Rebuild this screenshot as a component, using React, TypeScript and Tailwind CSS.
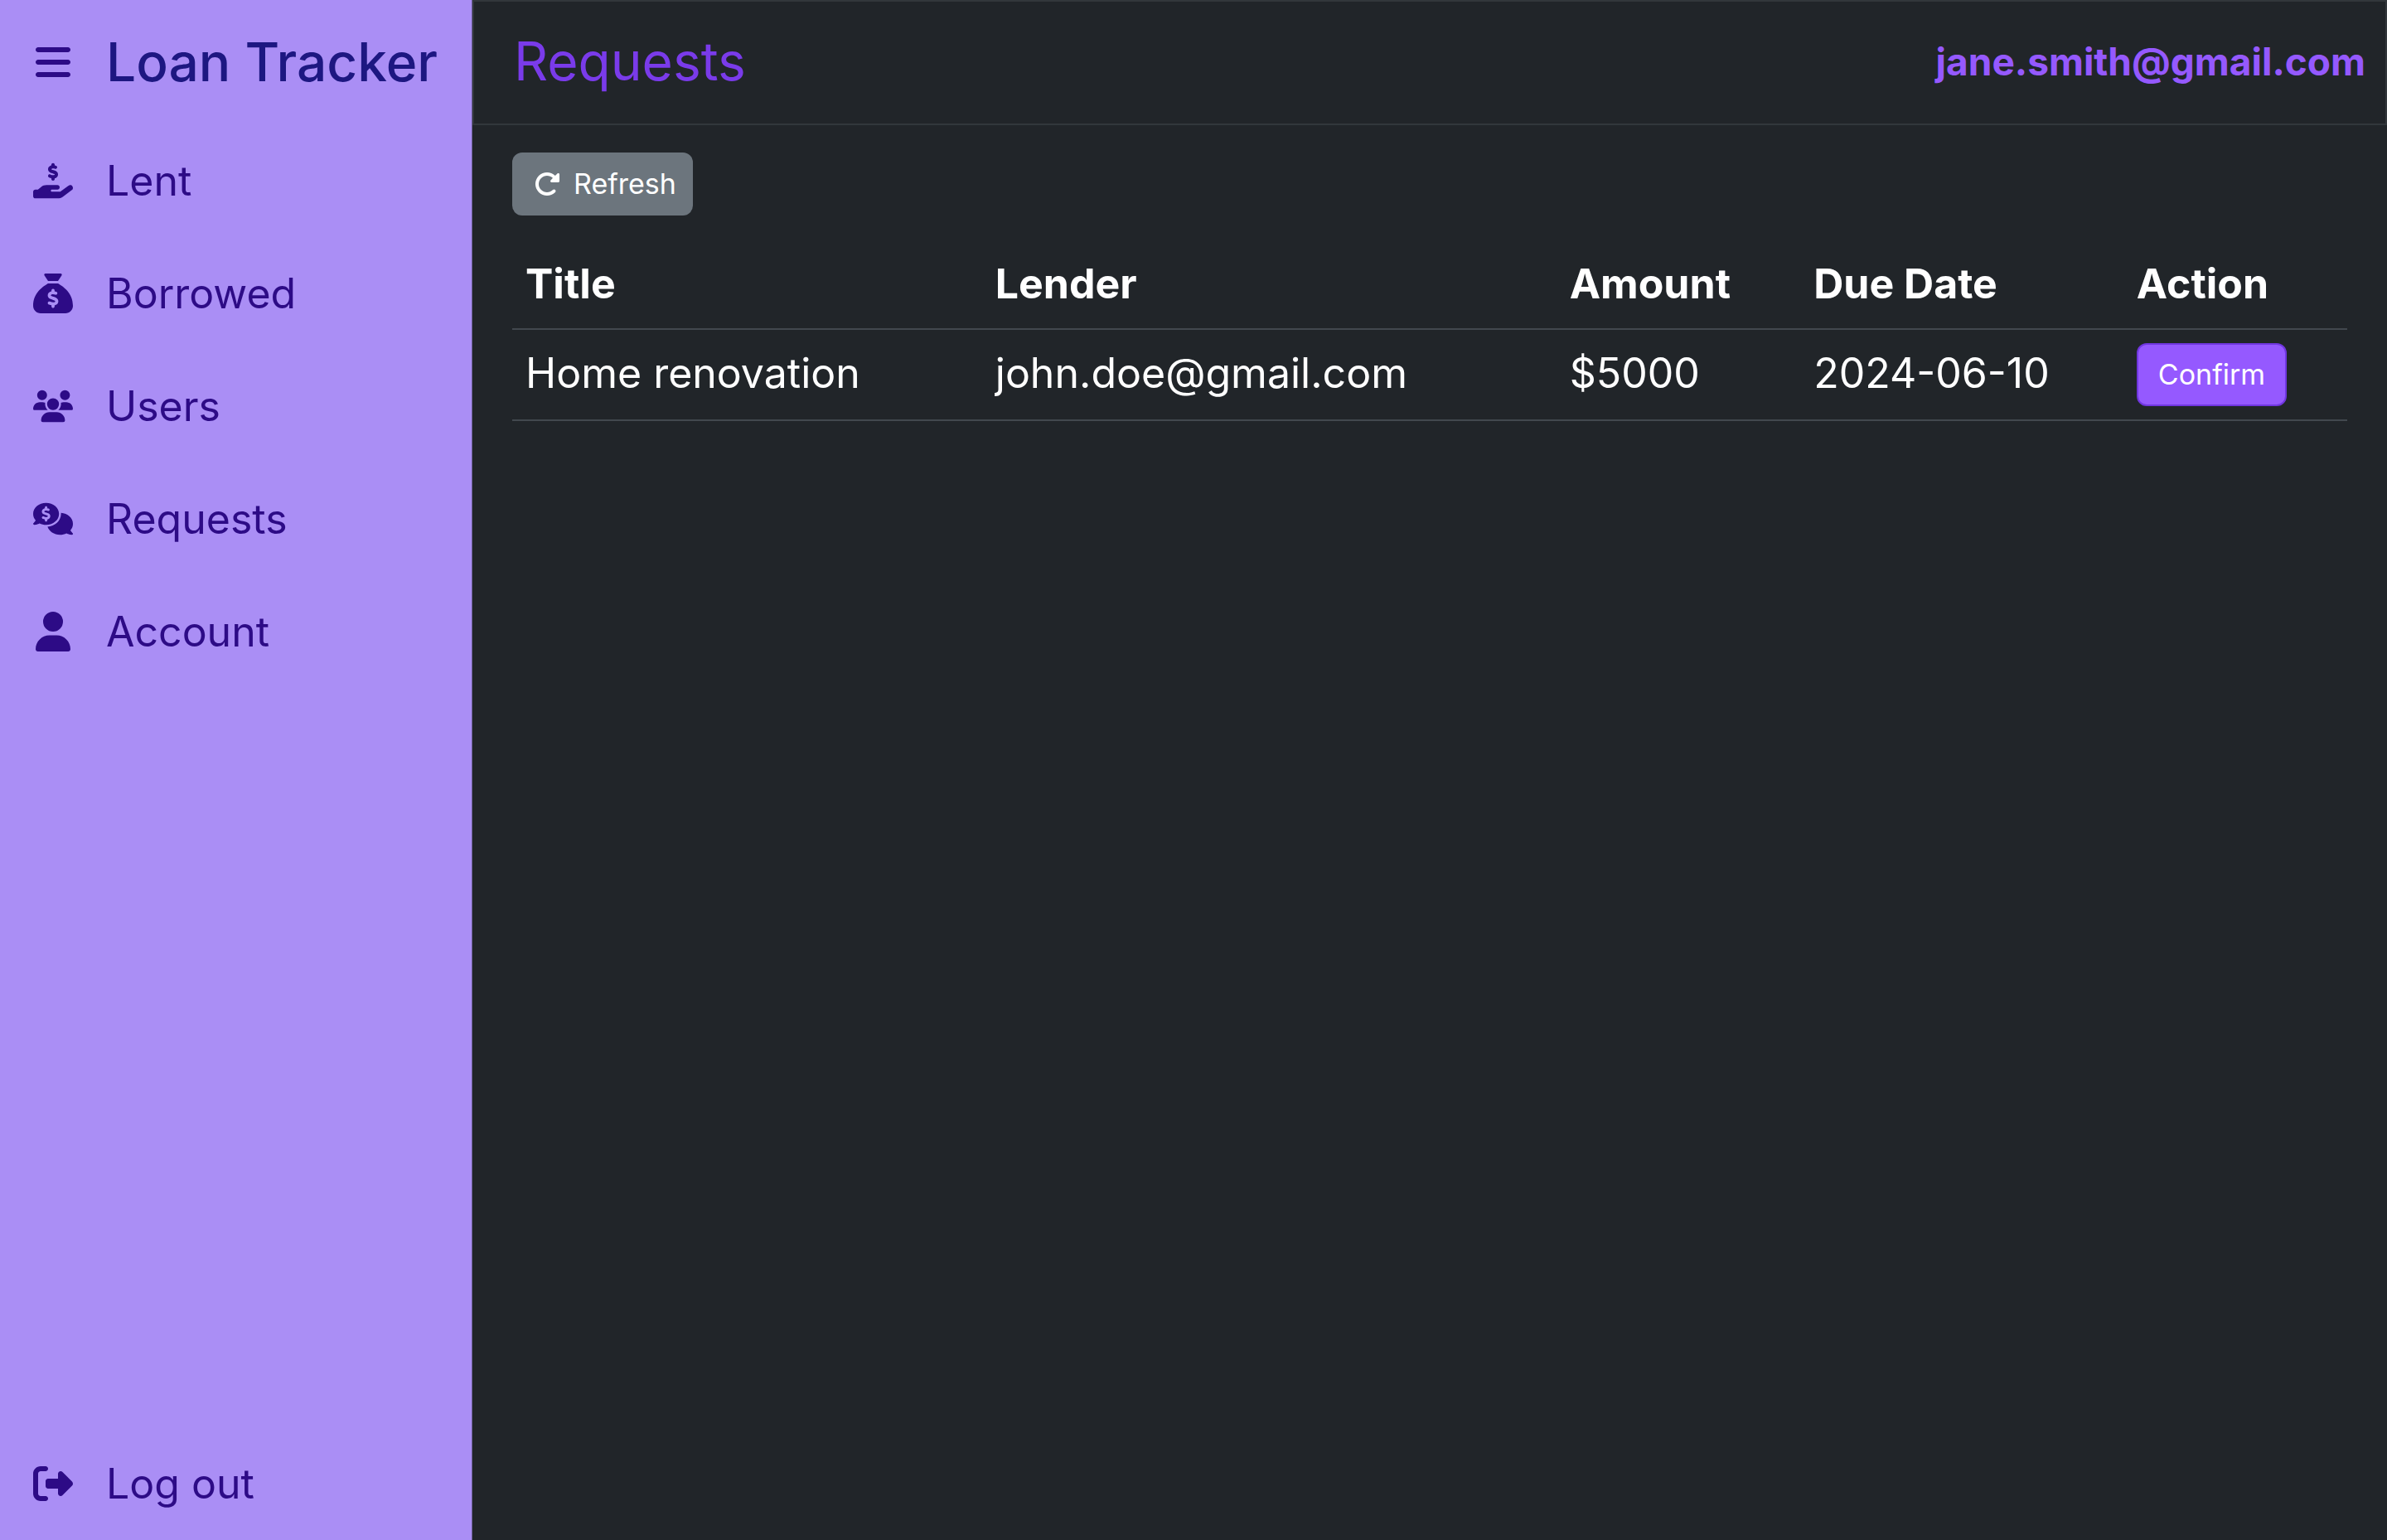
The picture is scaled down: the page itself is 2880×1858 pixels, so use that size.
import type { IconType } from 'react-icons';
import {
  FaBars,
  FaCommentsDollar,
  FaHandHoldingDollar,
  FaRightFromBracket,
  FaRotateRight,
  FaSackDollar,
  FaUser,
  FaUsers,
} from 'react-icons/fa6';

type NavItem = { label: string; icon: IconType };

const navItems: NavItem[] = [
  { label: 'Lent', icon: FaHandHoldingDollar },
  { label: 'Borrowed', icon: FaSackDollar },
  { label: 'Users', icon: FaUsers },
  { label: 'Requests', icon: FaCommentsDollar },
  { label: 'Account', icon: FaUser },
];

const requests = [
  { title: 'Home renovation', lender: 'john.doe@gmail.com', amount: '$5000', due: '2024-06-10' },
];

function NavLink({ label, icon: Icon }: NavItem) {
  return (
    <a href="#" className="flex h-[136px] items-center gap-10 px-10 text-[50px] leading-[72px]">
      <Icon className="size-12 shrink-0" aria-hidden="true" />
      {label}
    </a>
  );
}

function Sidebar() {
  return (
    <nav className="flex w-[570px] shrink-0 flex-col border-r border-[#6a5c95] bg-[#aa8ef5] text-[#2d0b86]">
      <div className="flex h-[150px] items-center gap-10 pl-10">
        <button type="button" aria-label="Toggle menu" className="shrink-0">
          <FaBars className="size-12" />
        </button>
        <span className="text-[64px] leading-[72px] font-medium whitespace-nowrap text-[#1d1781]">
          Loan Tracker
        </span>
      </div>
      {navItems.map((item) => (
        <NavLink key={item.label} {...item} />
      ))}
      <div className="mt-auto">
        <NavLink label="Log out" icon={FaRightFromBracket} />
      </div>
    </nav>
  );
}

function RequestsTable() {
  return (
    <table className="mt-[27px] w-full table-fixed border-collapse text-left text-[50px] leading-[72px]">
      <thead>
        <tr className="h-[110px] border-b-2 border-[#42484e]">
          <th scope="col" className="w-[25.6%] px-4 font-bold">Title</th>
          <th scope="col" className="w-[31.3%] px-4 font-bold">Lender</th>
          <th scope="col" className="w-[13.3%] px-4 font-bold">Amount</th>
          <th scope="col" className="w-[17.6%] px-4 font-bold">Due Date</th>
          <th scope="col" className="px-4 font-bold">Action</th>
        </tr>
      </thead>
      <tbody>
        {requests.map((r) => (
          <tr key={r.title} className="h-[110px] border-b-2 border-[#42484e]">
            <td className="px-4 pb-1">{r.title}</td>
            <td className="px-4 pb-1">{r.lender}</td>
            <td className="px-4 pb-1">{r.amount}</td>
            <td className="px-4 pb-1">{r.due}</td>
            <td className="px-4">
              <button
                type="button"
                className="flex h-[76px] items-center rounded-xl border-2 border-[#7036e0] bg-[#9559ff] px-6 text-[34px] leading-[48px]"
              >
                Confirm
              </button>
            </td>
          </tr>
        ))}
      </tbody>
    </table>
  );
}

export default function App() {
  return (
    <div className="flex min-h-screen bg-[#212529] font-['Inter',sans-serif] text-white">
      <Sidebar />
      <main className="flex min-w-0 flex-1 flex-col">
        <header className="flex h-[151px] items-center justify-between border-2 border-[#32373b] pr-6 pb-1 pl-12">
          <h1 className="text-[64px] leading-[72px] text-[#7a3bea]">Requests</h1>
          <span className="text-[46px] leading-[66px] font-bold text-[#9559ff]">jane.smith@gmail.com</span>
        </header>
        <section className="px-12 pt-[33px]">
          <button
            type="button"
            className="flex h-[76px] items-center gap-4 rounded-xl bg-[#6c757d] pr-5 pl-[26px] text-[34px] leading-[48px]"
          >
            <FaRotateRight className="size-8" aria-hidden="true" />
            Refresh
          </button>
          <RequestsTable />
        </section>
      </main>
    </div>
  );
}
